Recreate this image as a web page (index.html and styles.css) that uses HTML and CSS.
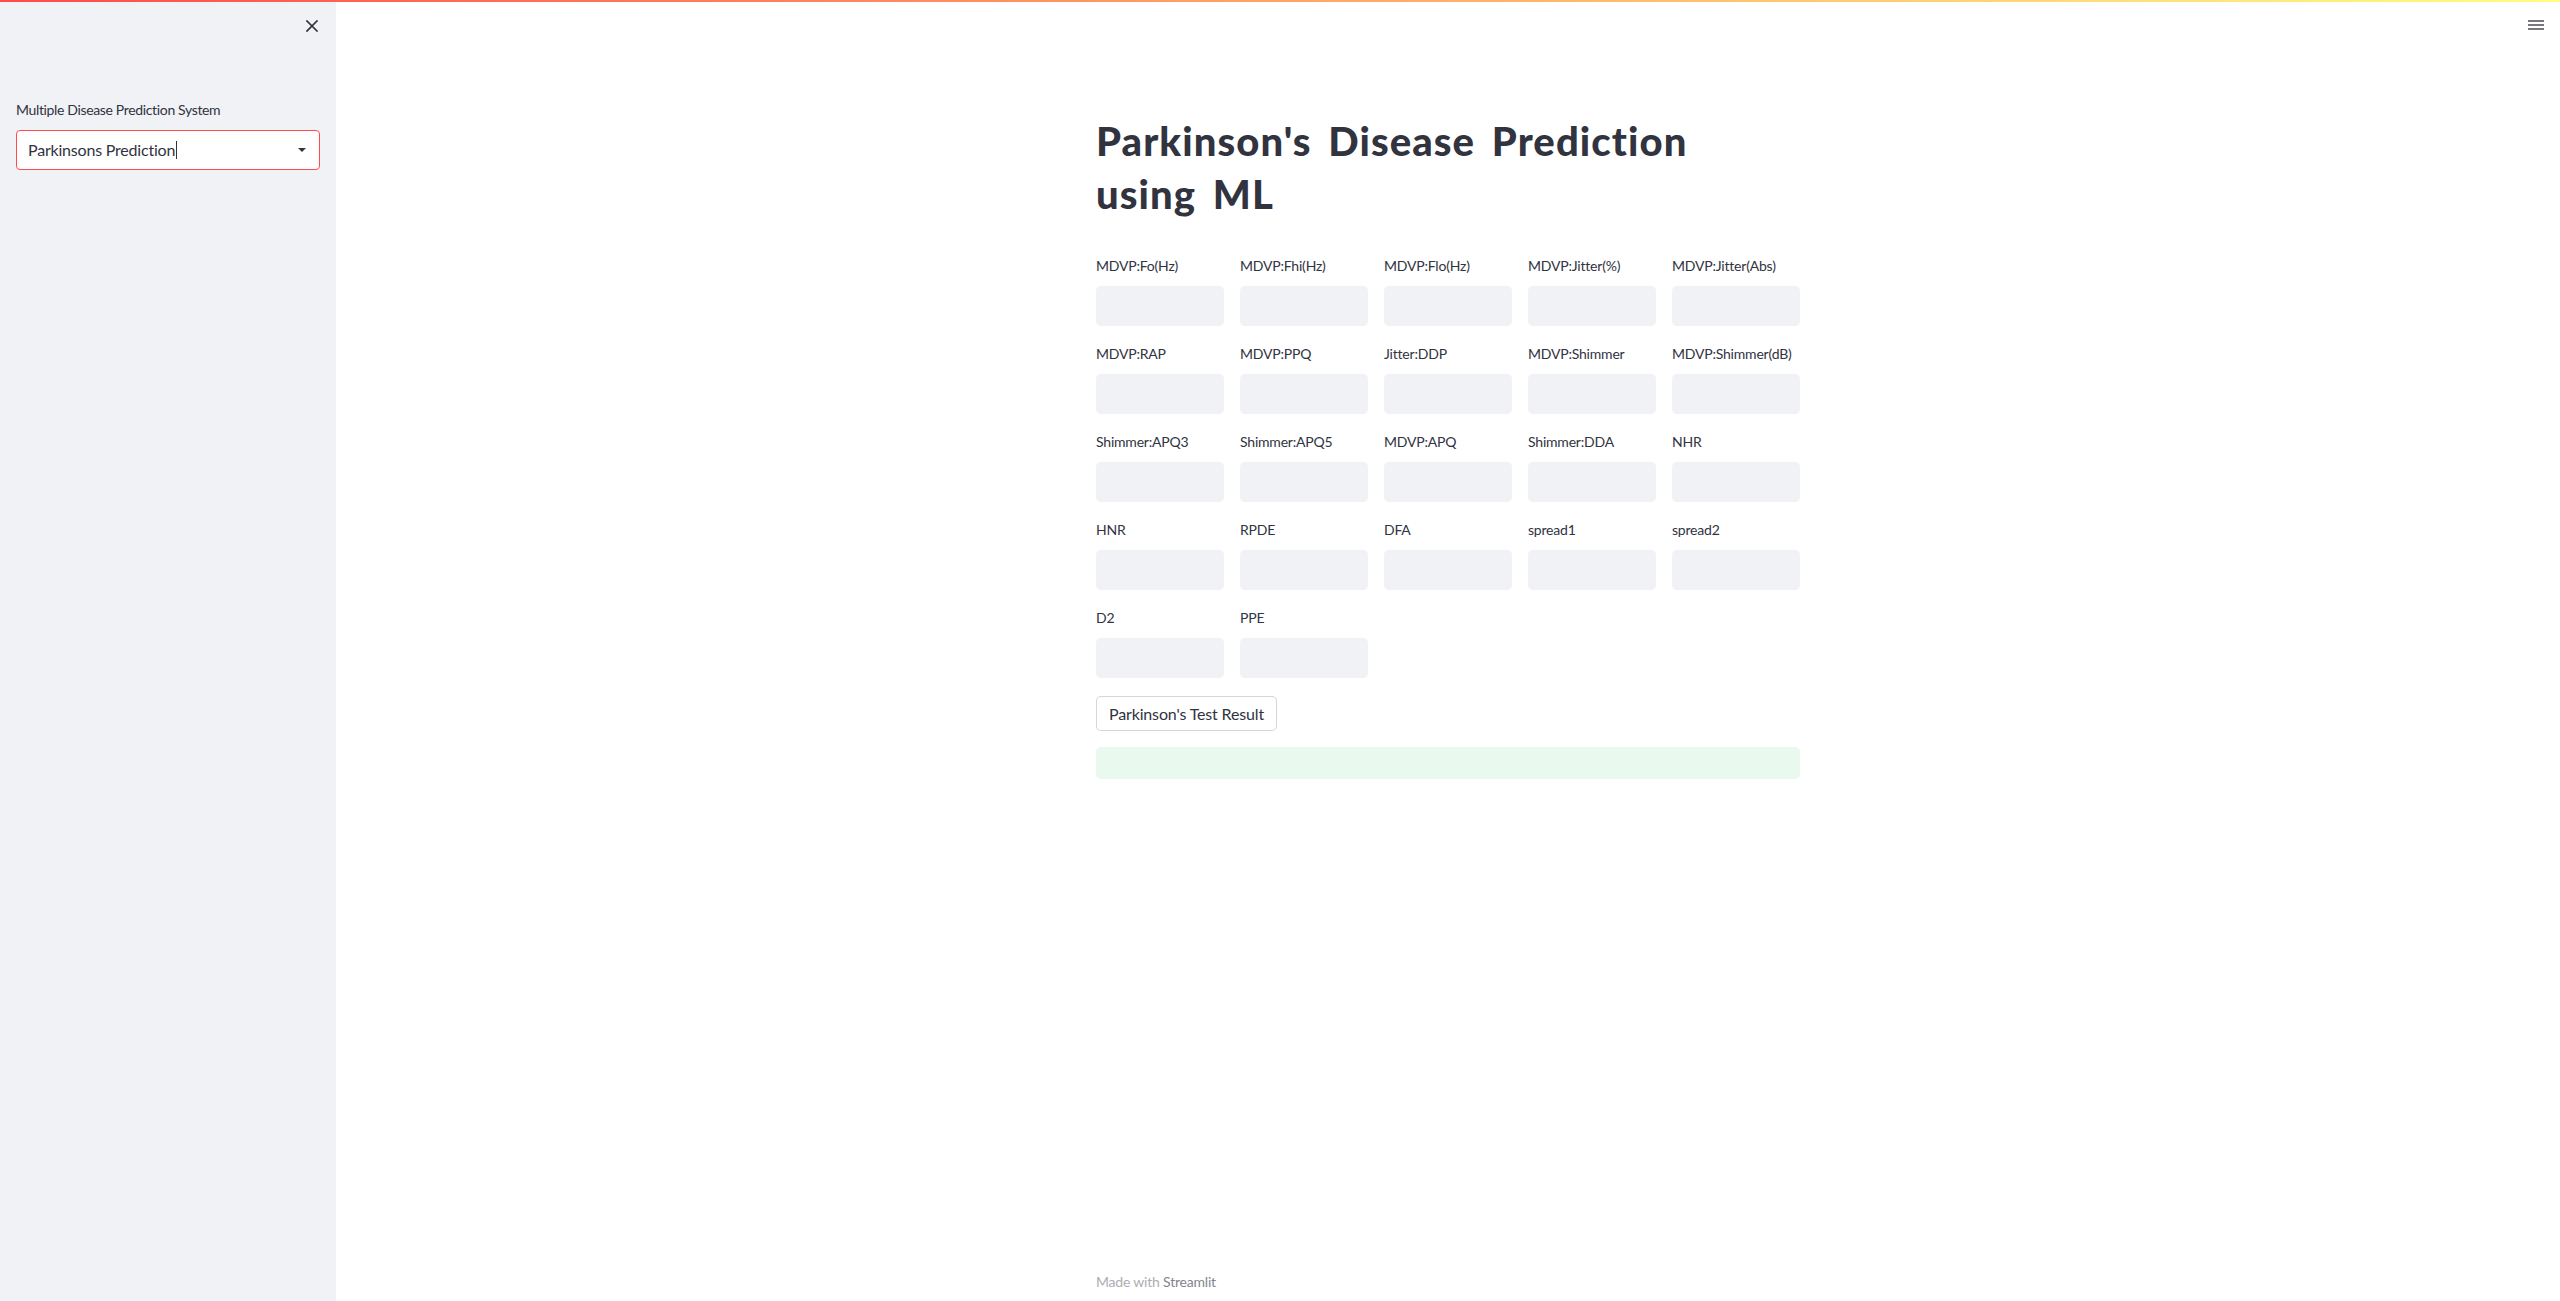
FILE: index.html
```html
<!DOCTYPE html>
<html lang="en">
<head>
<meta charset="utf-8">
<title>Parkinson's Disease Prediction</title>
<link rel="stylesheet" href="styles.css">
</head>
<body>
<div class="decoration"></div>
<div class="app">
  <aside class="sidebar">
    <div class="sidebar-top">
      <button class="close-btn" aria-label="Close sidebar">
        <svg width="12" height="12" viewBox="0 0 12 12"><path d="M1 1 L11 11 M11 1 L1 11" stroke="#31333f" stroke-width="1.7" stroke-linecap="square" fill="none"/></svg>
      </button>
    </div>
    <label class="side-label">Multiple Disease Prediction System</label>
    <div class="select">
      <span class="select-value">Parkinsons Prediction</span><span class="caret"></span>
      <svg class="drop" width="8" height="4" viewBox="0 0 8 4"><polygon points="0,0 8,0 4,4" fill="#31333f"/></svg>
    </div>
  </aside>
  <main class="main">
    <header class="header">
      <svg width="16" height="10" viewBox="0 0 16 10"><path d="M0 1 H16 M0 5 H16 M0 9 H16" stroke="#4a4b55" stroke-width="1.6" fill="none"/></svg>
    </header>
    <div class="block">
      <h1 class="title">Parkinson's Disease Prediction using ML</h1>
      <div class="grid">
        <div class="field"><label>MDVP:Fo(Hz)</label><div class="input"></div></div>
        <div class="field"><label>MDVP:Fhi(Hz)</label><div class="input"></div></div>
        <div class="field"><label>MDVP:Flo(Hz)</label><div class="input"></div></div>
        <div class="field"><label>MDVP:Jitter(%)</label><div class="input"></div></div>
        <div class="field"><label>MDVP:Jitter(Abs)</label><div class="input"></div></div>
        <div class="field"><label>MDVP:RAP</label><div class="input"></div></div>
        <div class="field"><label>MDVP:PPQ</label><div class="input"></div></div>
        <div class="field"><label>Jitter:DDP</label><div class="input"></div></div>
        <div class="field"><label>MDVP:Shimmer</label><div class="input"></div></div>
        <div class="field"><label>MDVP:Shimmer(dB)</label><div class="input"></div></div>
        <div class="field"><label>Shimmer:APQ3</label><div class="input"></div></div>
        <div class="field"><label>Shimmer:APQ5</label><div class="input"></div></div>
        <div class="field"><label>MDVP:APQ</label><div class="input"></div></div>
        <div class="field"><label>Shimmer:DDA</label><div class="input"></div></div>
        <div class="field"><label>NHR</label><div class="input"></div></div>
        <div class="field"><label>HNR</label><div class="input"></div></div>
        <div class="field"><label>RPDE</label><div class="input"></div></div>
        <div class="field"><label>DFA</label><div class="input"></div></div>
        <div class="field"><label>spread1</label><div class="input"></div></div>
        <div class="field"><label>spread2</label><div class="input"></div></div>
        <div class="field"><label>D2</label><div class="input"></div></div>
        <div class="field"><label>PPE</label><div class="input"></div></div>
      </div>
      <button class="btn">Parkinson's Test Result</button>
      <div class="success"></div>
    </div>
    <footer class="footer">Made with <span class="brand">Streamlit</span></footer>
  </main>
</div>
</body>
</html>
```

FILE: styles.css
```css
* { box-sizing: border-box; }

html, body {
  margin: 0;
  padding: 0;
  height: 100%;
  background: #ffffff;
  color: #31333f;
  font-family: Lato, "Noto Sans", "Liberation Sans", sans-serif;
}

.decoration {
  position: fixed;
  top: 0;
  left: 0;
  right: 0;
  height: 2px;
  background: linear-gradient(90deg, rgb(255, 75, 75), rgb(255, 253, 128));
  z-index: 10;
}

.app {
  display: flex;
  height: 100vh;
}

.sidebar {
  width: 336px;
  flex: none;
  background: #f0f2f6;
  padding: 0 16px;
  display: flex;
  flex-direction: column;
}

.sidebar-top {
  height: 52px;
  display: flex;
  justify-content: flex-end;
  align-items: flex-start;
  padding-top: 20px;
  padding-right: 2px;
}

.close-btn {
  border: none;
  background: none;
  padding: 0;
  width: 12px;
  height: 12px;
  display: block;
}

.close-btn svg { display: block; }

.side-label {
  display: block;
  margin-top: 50px;
  font-size: 14px;
  line-height: 16px;
  letter-spacing: -0.35px;
  margin-bottom: 12px;
  color: #31333f;
}

.select {
  height: 40px;
  border: 1px solid rgb(255, 75, 75);
  border-radius: 4px;
  background: #ffffff;
  display: flex;
  align-items: center;
  padding: 0 13px 0 11px;
}

.select-value {
  font-size: 16px;
  line-height: 38px;
  letter-spacing: -0.2px;
  color: #31333f;
}

.caret {
  width: 1px;
  height: 18px;
  background: #31333f;
  margin-left: 1px;
}

.drop {
  margin-left: auto;
  display: block;
}

.main {
  flex: 1;
  display: flex;
  flex-direction: column;
  min-width: 0;
}

.header {
  height: 50px;
  display: flex;
  justify-content: flex-end;
  align-items: flex-start;
  padding: 20px 16px 0 0;
}

.header svg { display: block; }

.block {
  width: 704px;
  margin: 0 auto;
  padding-top: 65px;
}

.title {
  margin: 0;
  font-size: 40px;
  font-weight: 900;
  line-height: 53px;
  letter-spacing: 1.1px;
  word-spacing: 6px;
  color: #31333f;
  width: 650px;
}

.grid {
  margin-top: 37px;
  display: grid;
  grid-template-columns: repeat(5, 1fr);
  column-gap: 16px;
  row-gap: 20px;
}

.field label {
  display: block;
  font-size: 14px;
  line-height: 16px;
  letter-spacing: -0.2px;
  margin-bottom: 12px;
  color: #31333f;
  white-space: nowrap;
}

.input {
  height: 40px;
  background: #f0f2f6;
  border-radius: 5px;
}

.btn {
  display: block;
  margin-top: 18px;
  height: 35px;
  padding: 0 12px;
  border: 1px solid rgba(49, 51, 63, 0.2);
  border-radius: 5px;
  background: #ffffff;
  font-family: inherit;
  font-size: 16px;
  line-height: 33px;
  letter-spacing: -0.15px;
  color: #31333f;
}

.success {
  margin-top: 16px;
  height: 32px;
  border-radius: 5px;
  background: rgb(233, 249, 238);
}

.footer {
  margin-top: auto;
  width: 704px;
  margin-left: auto;
  margin-right: auto;
  font-size: 14px;
  line-height: 16px;
  letter-spacing: -0.2px;
  padding-bottom: 11px;
  color: #adadb2;
}

.brand {
  color: #83848c;
}
```
